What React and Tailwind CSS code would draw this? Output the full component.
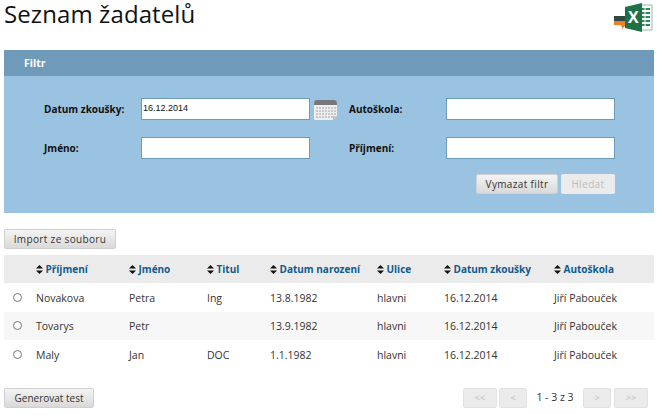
const sans = "font-['Open_Sans',sans-serif]";

function Sort() {
  return (
    <svg width="7" height="9" viewBox="0 0 7 9" className="inline-block mr-[2.5px] align-[-1px]">
      <path d="M3.5 0 L7 3.6 H0 Z M0 5.4 H7 L3.5 9 Z" fill="#111" />
    </svg>
  );
}

function Excel() {
  return (
    <svg width="39" height="29" viewBox="0 0 39 29" className="block">
      <path d="M0 13 H11 V9.5 L16 14 V18 H0 Z" fill="#2f4a45" />
      <path d="M0 18 H16 L8 26 V23.5 H7 V22 H0 Z" fill="#f37c25" />
      <rect x="24" y="2" width="14" height="25" fill="#fff" stroke="#8fbfa5" />
      <path d="M27 6 H36 M27 10 H36 M27 14 H36 M27 18 H36 M27 22 H36" stroke="#2f8a5b" strokeWidth="2" />
      <path d="M31 3 V26" stroke="#fff" />
      <path d="M11 4 L28 0 V29 L11 25 Z" fill="#1e7145" />
      <text x="14" y="20" fill="#fff" fontSize="16" fontWeight="700" fontFamily="'Open Sans',sans-serif">X</text>
    </svg>
  );
}

function Calendar() {
  return (
    <svg width="25" height="21" viewBox="0 0 25 21" className="block">
      <path d="M1 5 Q1 1 4 1 H21 Q24 1 24 5 V6 H1 Z" fill="#77777c" />
      <path d="M1 6 H24 V17 L20 21 H2 Q1 21 1 20 Z" fill="#eeeeee" />
      <path d="M24 17 L20 21 V17 Z" fill="#b5b5b5" />
      <g fill="#c9c9c9">
        {[8, 11, 14, 17].map((y) =>
          [3, 6, 9, 12, 15, 18, 21].map((x) => <rect key={`${x}-${y}`} x={x} y={y} width="2" height="2" />)
        )}
      </g>
    </svg>
  );
}

function Btn({ children, className = "" }) {
  return (
    <button className={`block h-[20px] rounded-[2px] border border-[#d0d0d0] bg-gradient-to-b from-[#f4f4f4] to-[#d9d9d9] text-[10px] leading-none text-[#333] tracking-[0.35px] ${sans} ${className}`}>
      {children}
    </button>
  );
}

function Pg({ children, className }) {
  return (
    <div className={`h-[20px] rounded-[2px] bg-[#ebebeb] border border-[#e2e2e2] flex items-center justify-center text-[9px] text-[#bbb] ${className}`}>
      {children}
    </div>
  );
}

function Field({ label, value, labelW }) {
  return (
    <div className="flex items-center">
      <label className={`text-[10px] font-bold text-[#111] ${labelW}`}>{label}</label>
      <div className="w-[169px] h-[22px] bg-white border border-[#6e9aba] flex items-center pl-[1px] text-[9px] text-[#111] font-['Liberation_Sans',sans-serif]">
        {value}
      </div>
    </div>
  );
}

const cols = ["w-[32px]", "w-[93px]", "w-[78px]", "w-[63px]", "w-[107px]", "w-[67px]", "w-[110px]", "w-[100px]"];
const heads = ["Příjmení", "Jméno", "Titul", "Datum narození", "Ulice", "Datum zkoušky", "Autoškola"];
const rows = [
  { h: "h-[29px]", bg: "bg-white", c: ["Novakova", "Petra", "Ing", "13.8.1982", "hlavni", "16.12.2014", "Jiří Pabouček"] },
  { h: "h-[28px]", bg: "bg-[#f7f7f7]", c: ["Tovarys", "Petr", "", "13.9.1982", "hlavni", "16.12.2014", "Jiří Pabouček"] },
  { h: "h-[29px]", bg: "bg-white", c: ["Maly", "Jan", "DOC", "1.1.1982", "hlavni", "16.12.2014", "Jiří Pabouček"] },
];

export default function App() {
  return (
    <div className={`w-[662px] h-[415px] bg-white px-[4px] ${sans}`}>
      <div className="w-[650px] h-[50px] flex justify-between">
        <h1 className="text-[24px] leading-[27px] font-medium text-[#111] tracking-[0.1px]">Seznam žadatelů</h1>
        <div className="mt-[3px] mr-[1px]"><Excel /></div>
      </div>

      <div className="w-[650px] h-[163px] bg-[#9ac2e1]">
        <div className="h-[26px] bg-[#6f9aba] flex items-center pl-[20px] pt-[2px] text-[10.5px] font-bold text-white">Filtr</div>
        <div className="pt-[22px] pl-[40px] flex flex-col gap-[17px]">
          <div className="flex items-center">
            <Field label="Datum zkoušky:" value="16.12.2014" labelW="w-[97px]" />
            <div className="ml-[3px] w-[36px] shrink-0"><Calendar /></div>
            <Field label="Autoškola:" labelW="w-[97px]" />
          </div>
          <div className="flex items-center">
            <Field label="Jméno:" labelW="w-[97px]" />
            <div className="ml-[3px] w-[36px] shrink-0" />
            <Field label="Příjmení:" labelW="w-[97px]" />
          </div>
        </div>
        <div className="mt-[15px] w-[611px] flex justify-end gap-[3px]">
          <Btn className="w-[82px]">Vymazat filtr</Btn>
          <button className="w-[54px] h-[20px] rounded-[2px] bg-[#ebebeb] text-[10px] leading-none text-[#bbb] tracking-[0.35px]">Hledat</button>
        </div>
      </div>

      <div className="mt-[16px]"><Btn className="w-[112px]">Import ze souboru</Btn></div>

      <div className="mt-[6px] w-[650px]">
        <div className="flex h-[28px] items-center bg-[#ebebeb] text-[10px] font-bold text-[#0d5c91]">
          <div className={cols[0]} />
          {heads.map((h, i) => (
            <div key={h} className={cols[i + 1]}><Sort />{h}</div>
          ))}
        </div>
        {rows.map((r, ri) => (
          <div key={ri} className={`flex items-center pt-[2px] ${r.h} ${r.bg} text-[10.5px] text-[#333]`}>
            <div className={`${cols[0]} pl-[9px]`}>
              <div className="w-[9px] h-[9px] rounded-full border border-[#777] bg-white -mt-[3px]" />
            </div>
            {r.c.map((t, i) => (
              <div key={i} className={cols[i + 1]}>{t}</div>
            ))}
          </div>
        ))}
      </div>

      <div className="mt-[19px] w-[650px] flex items-center">
        <Btn className="w-[90px] !tracking-normal font-['Liberation_Sans',sans-serif]">Generovat test</Btn>
        <div className="ml-auto flex items-center mr-[6px]">
          <Pg className="w-[34px]">&lt;&lt;</Pg>
          <Pg className="w-[28px] ml-[2px]">&lt;</Pg>
          <div className="w-[56px] text-center text-[10.5px] text-[#333]">1 - 3 z 3</div>
          <Pg className="w-[28px]">&gt;</Pg>
          <Pg className="w-[34px] ml-[3px]">&gt;&gt;</Pg>
        </div>
      </div>
    </div>
  );
}
